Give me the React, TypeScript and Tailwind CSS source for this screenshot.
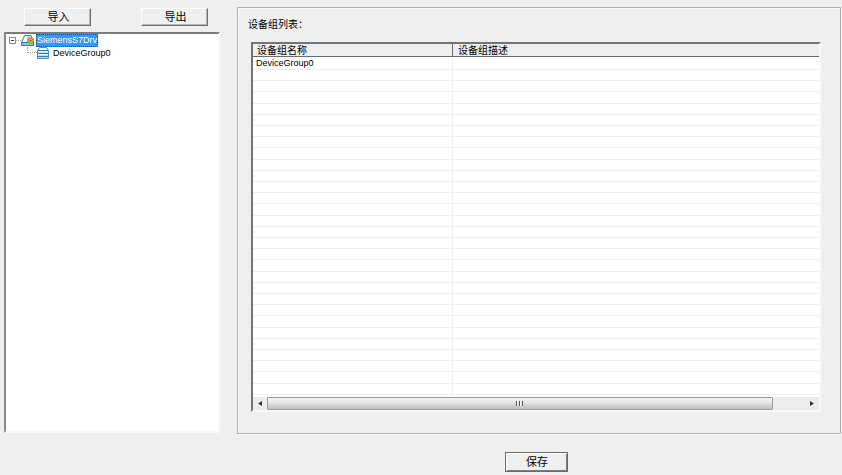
import { useState } from "react";

type DeviceGroup = {
  name: string;
  description: string;
};

const DRIVER_NAME = "SiemensS7Drv";
const DEVICE_GROUPS: DeviceGroup[] = [{ name: "DeviceGroup0", description: "" }];

// The list always shows this many grid rows, filled or not
const VISIBLE_ROWS = 30;

function DriverIcon() {
  return (
    <svg className="h-[13px] w-[14px] shrink-0" viewBox="0 0 14 13" aria-hidden="true">
      <path d="M3.5 1.5h6.500l2.500 7v3h-12v-3z" fill="#cfe8f7" stroke="#3d84b4" />
      <path d="M0.5 8.5h12v3h-12z" fill="#8cc6e6" stroke="#2f78aa" />
      <path d="M4 2.5h2.500L5 8H2z" fill="#ffffff" />
      <circle cx="9.5" cy="6.5" r="2.800" fill="#e0c437" stroke="#a48a1c" strokeWidth="1.600" strokeDasharray="1.300 0.900" />
      <circle cx="9.5" cy="6.5" r="2.500" fill="#dcbf33" stroke="#a48a1c" strokeWidth="0.600" />
      <circle cx="9.5" cy="6.5" r="1" fill="#74620f" />
    </svg>
  );
}

function GroupIcon() {
  return (
    <svg className="h-[12px] w-[12px] shrink-0" viewBox="0 0 12 12" aria-hidden="true">
      <path d="M2.5 0.5h7l2 3v8h-11v-8z" fill="#b9e0f2" stroke="#4a92bb" />
      <path d="M3 1h6l1 2H2z" fill="#f2fafe" />
      <path d="M1 3.5h10M1 6.5h10M1 9.5h10" stroke="#2f7fae" />
      <path d="M1 4.5h10M1 7.5h10" stroke="#e4f5fc" />
    </svg>
  );
}

function DeviceTree() {
  const [expanded, setExpanded] = useState(true);

  return (
    <ul className="flex-1 border-2 border-t-[#7b7b7b] border-l-[#8a8a8a] border-r-[#f8f8f8] border-b-[#f8f8f8] bg-white pl-[3px] text-[9px] leading-[12px]">
      <li>
        <div className="flex h-[13px] items-center">
          <button
            type="button"
            aria-label={expanded ? "折叠" : "展开"}
            aria-expanded={expanded}
            onClick={() => setExpanded(!expanded)}
            className="flex h-[7px] w-[7px] items-center justify-center border border-[#8c8c8c] bg-white"
          >
            <svg className="h-[5px] w-[5px] shrink-0" viewBox="0 0 5 5" aria-hidden="true">
              <path d={expanded ? "M1 2.5h3" : "M1 2.5h3M2.5 1v3"} stroke="#333333" />
            </svg>
          </button>
          <span className="w-[5px] border-t border-dotted border-[#9a9a9a]" />
          <DriverIcon />
          <span className="ml-px border border-dotted border-[#3b4652] bg-[#3797f5] leading-[11px] text-white">
            {DRIVER_NAME}
          </span>
        </div>
        {expanded && (
          <ul>
            {DEVICE_GROUPS.map((group) => (
              <li key={group.name} className="flex h-[12px] items-center pl-[18px]">
                <span className="h-[6px] w-[10px] self-start border-b border-l border-dotted border-[#9a9a9a]" />
                <GroupIcon />
                <span className="ml-1 text-black">{group.name}</span>
              </li>
            ))}
          </ul>
        )}
      </li>
    </ul>
  );
}

function DeviceGroupTable() {
  const rows = Array.from({ length: VISIBLE_ROWS }, (_, i) => DEVICE_GROUPS[i]);

  return (
    <table
      aria-labelledby="group-list-label"
      className="w-full flex-1 table-fixed border-separate border-spacing-0 text-left"
    >
      <colgroup>
        <col className="w-[200px]" />
        <col />
      </colgroup>
      <thead>
        <tr className="h-[13px] bg-[#efefef] text-[10px] leading-[11px]">
          <th className="border-r border-b border-[#6b6b6b] p-0 pt-px pl-1 font-normal">设备组名称</th>
          <th className="border-b border-[#6b6b6b] p-0 pt-px pl-[5px] font-normal">设备组描述</th>
        </tr>
      </thead>
      <tbody className="text-[9px] leading-[11px]">
        {rows.map((group, i) => (
          <tr key={i} className="first:h-[13px]">
            <td className="border-r border-b border-[#efefef] p-0 pl-[3px]">{group?.name}</td>
            <td className="border-b border-[#efefef] p-0 pl-[3px]">{group?.description}</td>
          </tr>
        ))}
      </tbody>
    </table>
  );
}

function HorizontalScrollbar() {
  return (
    <div className="flex h-[13px] bg-[#ececec]">
      <button type="button" aria-label="向左滚动" className="flex w-[14px] items-center justify-center">
        <svg className="h-[5px] w-[4px]" viewBox="0 0 4 5" aria-hidden="true">
          <path d="M4 0v5L0 2.5z" fill="#333333" />
        </svg>
      </button>
      <div className="flex flex-1">
        <div className="flex w-[94%] items-center justify-center rounded-[1px] border border-[#9b9b9b] bg-linear-to-b from-[#f4f4f4] from-0% via-[#e4e4e4] via-45% to-[#bdbdbd] to-100%">
          <svg className="h-[5px] w-[7px]" viewBox="0 0 7 5" aria-hidden="true">
            <path d="M0.5 0v5M3.5 0v5M6.5 0v5" stroke="#555555" />
            <path d="M1.5 0v5M4.5 0v5" stroke="#fafafa" />
          </svg>
        </div>
      </div>
      <button type="button" aria-label="向右滚动" className="flex w-[14px] items-center justify-center">
        <svg className="h-[5px] w-[4px]" viewBox="0 0 4 5" aria-hidden="true">
          <path d="M0 0v5l4-2.500z" fill="#333333" />
        </svg>
      </button>
    </div>
  );
}

const toolButton =
  "h-[18px] w-[67px] border border-t-white border-l-white border-r-[#6e6e6e] border-b-[#6e6e6e] bg-[#efefef] pl-[2px] text-[11px] leading-[14px] shadow-[inset_-1px_-1px_0_#b4b4b4]";

export default function App() {
  return (
    <div className="flex min-h-screen bg-[#efefef] font-['Liberation_Sans','Noto_Sans_CJK_SC',sans-serif] text-black">
      {/* Driver tree */}
      <aside className="flex w-[220px] shrink-0 flex-col pb-[42px] pl-1">
        <div className="flex justify-between pt-2 pr-3 pb-[6px] pl-5">
          <button type="button" className={toolButton}>
            导入
          </button>
          <button type="button" className={toolButton}>
            导出
          </button>
        </div>
        <DeviceTree />
      </aside>

      {/* Device group list */}
      <main className="flex min-w-0 flex-1 flex-col pt-[7px] pr-px pb-[3px] pl-[17px]">
        <section className="flex flex-1 flex-col border border-[#b0b0b0] pt-[10px] pr-[19px] pb-[21px] pl-[10px] shadow-[inset_1px_1px_0_#fafafa,1px_1px_0_#fafafa]">
          <h2 id="group-list-label" className="text-[10px] leading-[14px] font-normal">
            设备组列表：
          </h2>
          <div className="mt-[10px] ml-[3px] flex flex-1 flex-col border-2 border-t-[#737373] border-l-[#737373] border-r-[#f8f8f8] border-b-[#f8f8f8] bg-white">
            <DeviceGroupTable />
            <div className="h-[2px]" />
            <HorizontalScrollbar />
          </div>
        </section>
        <div className="flex justify-center pt-[18px] pr-[6px]">
          <button
            type="button"
            className="h-[20px] w-[63px] border border-[#6b6b6b] bg-[#efefef] pl-[2px] text-[11px] leading-[14px] shadow-[inset_1px_1px_0_#ffffff,inset_-1px_-1px_0_#7d7d7d]"
          >
            保存
          </button>
        </div>
      </main>
    </div>
  );
}
